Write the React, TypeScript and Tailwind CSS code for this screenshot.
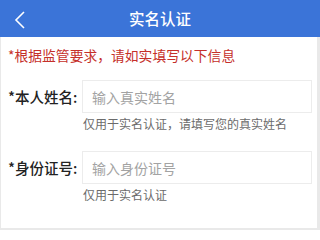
import React from 'react'

const font = { fontFamily: '"Noto Sans CJK SC", "Noto Sans", sans-serif' }

function Field({ label, placeholder, hint }: { label: string; placeholder: string; hint: string }) {
  return (
    <div>
      <div className="flex items-center">
        <div className="w-[74px] text-[14.5px] leading-[20px] font-medium text-[#222]">
          *{label}:
        </div>
        <input
          className="w-[230px] h-[33px] border border-[#ececec] bg-white pl-[9px] text-[14px] text-[#333] outline-none placeholder:text-[#a3a3a3]"
          placeholder={placeholder}
          style={font}
        />
      </div>
      <div className="ml-[75px] mt-[2px] text-[12px] leading-[18px] text-[#6b6b6b]">{hint}</div>
    </div>
  )
}

export default function App() {
  return (
    <div className="w-[320px] h-[230px] bg-white flex flex-col" style={font}>
      <div className="h-[37px] bg-[#3b74d8] relative flex items-center justify-center">
        <svg className="absolute left-[14px] top-[11px]" width="12" height="18" viewBox="0 0 12 18">
          <path d="M10 1 L2 9 L10 17" fill="none" stroke="white" strokeWidth="1.6" />
        </svg>
        <span className="text-white text-[15.5px] font-medium">实名认证</span>
      </div>
      <div className="flex-1 border-l border-r-[3px] border-b-2 border-[#e9e9e9] pl-[7px] pr-[5px]">
        <div className="pt-[10px] text-[13.8px] leading-[16px] text-[#c5302a]">
          *根据监管要求，请如实填写以下信息
        </div>
        <div className="mt-[17px] flex flex-col gap-[18px]">
          <Field label="本人姓名" placeholder="输入真实姓名" hint="仅用于实名认证，请填写您的真实姓名" />
          <Field label="身份证号" placeholder="输入身份证号" hint="仅用于实名认证" />
        </div>
      </div>
    </div>
  )
}
